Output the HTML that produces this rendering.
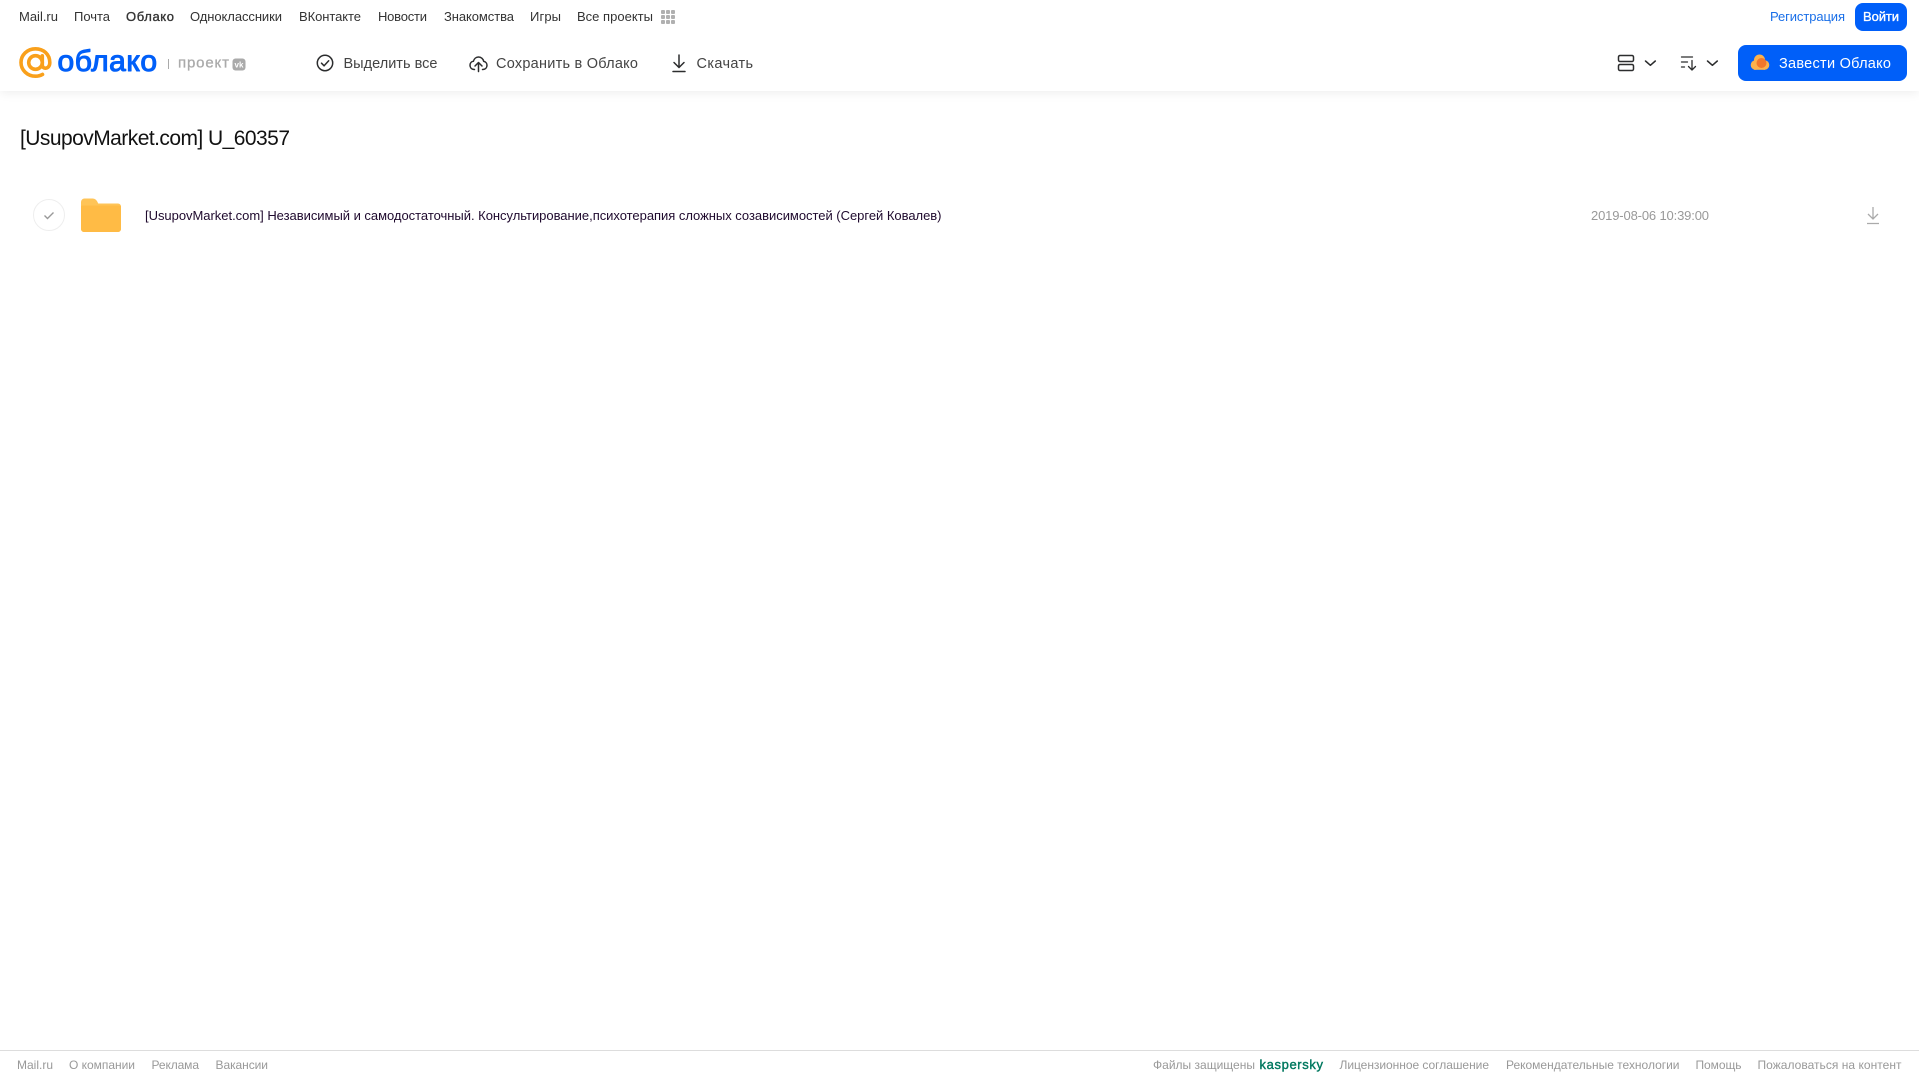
<!DOCTYPE html>
<html lang="ru"><head><meta charset="utf-8"><title>Облако</title>
<style>
html,body{margin:0;padding:0;background:#fff;width:1919px;height:1079px;overflow:hidden}
svg{position:absolute;left:0;top:0;display:block}
text{font-family:"Liberation Sans",Arial,sans-serif}
.hdr{position:absolute;left:0;top:0;width:1919px;height:91px;background:#fff;box-shadow:0 2px 10px rgba(0,0,0,.07)}
</style></head><body>
<div class="hdr"></div>
<svg width="1919" height="1079" viewBox="0 0 1919 1079" xmlns="http://www.w3.org/2000/svg">
<!-- top nav -->
<g font-size="13" fill="#333">
<text x="19" y="21" textLength="39">Mail.ru</text>
<text x="74" y="21" textLength="36">Почта</text>
<text x="126" y="21" textLength="48" stroke="#333" stroke-width=".35">Облако</text>
<text x="190" y="21" textLength="92">Одноклассники</text>
<text x="299" y="21" textLength="62">ВКонтакте</text>
<text x="378" y="21" textLength="49">Новости</text>
<text x="444" y="21" textLength="70">Знакомства</text>
<text x="530" y="21" textLength="31">Игры</text>
<text x="577" y="21" textLength="76">Все проекты</text>
</g>
<g fill="#b0b0b0">
<rect x="661" y="10" width="4" height="4" rx="1"/><rect x="666" y="10" width="4" height="4" rx="1"/><rect x="671" y="10" width="4" height="4" rx="1"/>
<rect x="661" y="15" width="4" height="4" rx="1"/><rect x="666" y="15" width="4" height="4" rx="1"/><rect x="671" y="15" width="4" height="4" rx="1"/>
<rect x="661" y="20" width="4" height="4" rx="1"/><rect x="666" y="20" width="4" height="4" rx="1"/><rect x="671" y="20" width="4" height="4" rx="1"/>
</g>
<text x="1770" y="21" font-size="13" fill="#1a6fe8" textLength="75">Регистрация</text>
<rect x="1855" y="3" width="52" height="28" rx="8" fill="#005ff9"/>
<text x="1863" y="21" font-size="13" fill="#fff" stroke="#fff" stroke-width=".35" textLength="36">Войти</text>
<!-- logo -->
<g fill="none" stroke="#f9a01b" stroke-width="3.600" stroke-linecap="round">
<circle cx="35.500" cy="62.500" r="6.800"/>
<path d="M42.300 55.800v9.200c0 4.600 7.500 4.600 7.500-2.500 0-8.200-6.300-13.700-14.300-13.700C27.300 48.800 21 55 21 62.500S27.300 76.200 35.500 76.200c2.800 0 5-.6 7-1.800"/>
</g>
<text x="57.500" y="71" font-size="30" fill="#005ff9" stroke="#005ff9" stroke-width="1.100" stroke-linejoin="round" textLength="99.500">облако</text>
<rect x="168" y="59" width="1" height="10" fill="#aaa"/>
<text x="178" y="67.500" font-size="15" fill="#aaa" stroke="#aaa" stroke-width=".3" textLength="51">проект</text>
<rect x="232.500" y="58.500" width="13" height="12" rx="3" fill="#aaa"/>
<text x="234.500" y="67.500" font-size="8" font-weight="700" fill="#fff" textLength="9">vk</text>
<!-- actions -->
<g fill="none" stroke="#2c2d2e" stroke-width="1.500" stroke-linecap="round" stroke-linejoin="round">
<circle cx="325" cy="63" r="7.700"/>
<path d="M321.500 63.200l2.600 2.600 4.600-5"/>
<path d="M474.500 69.500c-3 0-4.500-2-4.500-4.200 0-2.200 1.500-3.800 3.400-4 .7-2.600 2.700-4.300 5.100-4.300 2.700 0 4.800 2 5.200 4.400 1.900.3 3.300 1.900 3.300 3.900 0 2.200-1.500 4.200-4.500 4.200"/>
<path d="M478.500 71.500V62.500M475 66l3.500-3.500L482 66"/>
<path d="M679 55v12.500M674 62.500l5 5 5-5M673 71.500h12"/>
<path d="M1620 55.500h12a1.500 1.500 0 0 1 1.500 1.500v3a1.500 1.500 0 0 1-1.500 1.500h-12a1.500 1.500 0 0 1-1.500-1.500v-3a1.500 1.500 0 0 1 1.500-1.500zM1620 64.500h12a1.500 1.500 0 0 1 1.500 1.500v3a1.500 1.500 0 0 1-1.500 1.500h-12a1.500 1.500 0 0 1-1.500-1.500v-3a1.500 1.500 0 0 1 1.500-1.500z"/>
<path d="M1645.500 61l4.900 4.300 4.900-4.300M1707.500 61l4.900 4.300 4.900-4.300"/>
<path d="M1681.500 57h11M1681.500 62h6M1681.500 67h3M1692 60.500v9M1688.500 66.500l3.500 3.500 3.500-3.500" stroke-width="1.300"/>
</g>
<g font-size="14.500" fill="#444">
<text x="343.500" y="68" textLength="94">Выделить все</text>
<text x="496" y="68" textLength="142">Сохранить в Облако</text>
<text x="696.500" y="68" textLength="56.500">Скачать</text>
</g>
<!-- CTA -->
<rect x="1738" y="45" width="169" height="36" rx="8" fill="#005ff9"/>
<circle cx="1755.500" cy="65" r="4.800" fill="#fcb24c"/><circle cx="1759.500" cy="60" r="5.500" fill="#fcb24c"/><circle cx="1764.500" cy="65" r="4.800" fill="#fcb24c"/><rect x="1754" y="64" width="11" height="5.800" fill="#fcb24c"/>
<circle cx="1761.500" cy="63" r="5" fill="#f1772c"/>
<text x="1779" y="68" font-size="14.500" fill="#fff" textLength="112">Завести Облако</text>
<!-- title -->
<text x="20" y="145" font-size="21" fill="#111" textLength="270">[UsupovMarket.com] U_60357</text>
<!-- row -->
<circle cx="49" cy="215" r="15.500" fill="#fff" stroke="#eee"/>
<path d="M44.500 215.500l3 3 6-6" fill="none" stroke="#999" stroke-width="1.400"/>
<path d="M81 202a3.500 3.500 0 0 1 3.500-3.500h8c2.500 0 4 1.500 5 3.500l.7 1.500H118a3 3 0 0 1 3 3V229a3 3 0 0 1-3 3H84a3 3 0 0 1-3-3z" fill="#ffc457"/>
<path d="M81 207a1.500 1.500 0 0 1 1.500-1.500h37a1.500 1.500 0 0 1 1.500 1.500v22a3 3 0 0 1-3 3H84a3 3 0 0 1-3-3z" fill="#ffbb45"/>
<text x="145" y="220" font-size="13" fill="#1f0a2e" textLength="796.500">[UsupovMarket.com] Независимый и самодостаточный. Консультирование,психотерапия сложных созависимостей (Сергей Ковалев)</text>
<text x="1591" y="220" font-size="13" fill="#999" textLength="118">2019-08-06 10:39:00</text>
<path d="M1873 207v12M1868 214l5 5 5-5M1867 223.500h12" fill="none" stroke="#aaa" stroke-width="1.300"/>
<!-- footer -->
<rect x="0" y="1050" width="1919" height="1" fill="#ddd"/>
<g font-size="12" fill="#999">
<text x="17" y="1069" textLength="36">Mail.ru</text>
<text x="69" y="1069" textLength="66">О компании</text>
<text x="151.500" y="1069" textLength="47.500">Реклама</text>
<text x="215.500" y="1069" textLength="52.500">Вакансии</text>
<text x="1153" y="1069" textLength="102">Файлы защищены</text>
<text x="1339.500" y="1069" textLength="149.500">Лицензионное соглашение</text>
<text x="1506" y="1069" textLength="173.500">Рекомендательные технологии</text>
<text x="1695.500" y="1069" textLength="46">Помощь</text>
<text x="1757.500" y="1069" textLength="144">Пожаловаться на контент</text>
</g>
<text x="1259.500" y="1069" font-size="13" fill="#00785f" stroke="#00785f" stroke-width=".4" textLength="63.500">kaspersky</text>
</svg>
</body></html>
